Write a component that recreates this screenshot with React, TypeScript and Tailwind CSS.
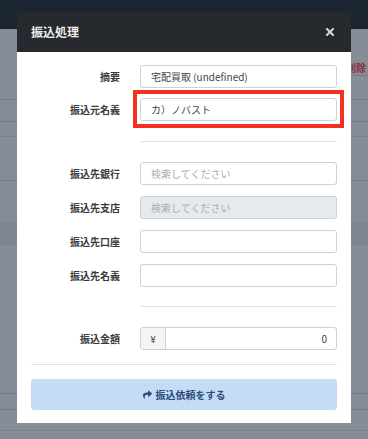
import React from 'react';
import { FaShare } from 'react-icons/fa';

const font = { fontFamily: '"Noto Sans CJK JP", "Noto Sans", sans-serif' };

function Field({ label, children }: { label: string; children: React.ReactNode }) {
  return (
    <div className="flex items-center h-[23px]">
      <div className="w-[89px] shrink-0 text-right text-[10px] font-bold text-[#3a3a3a] leading-none">{label}</div>
      <div className="ml-[20px] flex-1 h-full">{children}</div>
    </div>
  );
}

function TextBox({ value, placeholder, disabled }: { value?: string; placeholder?: string; disabled?: boolean }) {
  return (
    <div
      className={
        'h-full rounded-[3px] border border-[#cdd1da] flex items-center pl-[10px] text-[10px] leading-none ' +
        (disabled ? 'bg-[#e6e9ed]' : 'bg-white')
      }
    >
      {value ? <span className="text-[#444]">{value}</span> : <span className="text-[#a9adb5]">{placeholder}</span>}
    </div>
  );
}

export default function App() {
  return (
    <div className="relative w-[368px] h-[439px] overflow-hidden bg-[#878d96]" style={font}>
      {/* page behind the overlay */}
      <div className="h-[29px] bg-[#1b2531]" />
      <div className="h-[71px] border-b border-[#757b84] flex justify-end">
        <div className="mt-[31px] h-[16px] w-[22px] bg-[#8f8890] border-b border-[#757b84] text-[10px] leading-[16px] text-[#7a3440] font-bold">
          削除
        </div>
      </div>
      <div className="h-[22px] border-b border-[#757b84]" />
      <div className="h-[15px] border-b border-[#7a8089]" />
      <div className="h-[44px] border-b border-[#757b84]" />
      <div className="h-[41px]" />
      <div className="h-[23px] bg-[#7f858e]" />
      <div className="h-[149px] border-b border-[#757b84]" />
      <div className="h-[16px] border-b border-[#757b84]" />
      <div className="h-[21px] border-b border-[#7a8089]" />

      {/* modal */}
      <div className="absolute left-[17px] top-[12px] w-[334px] h-[411px] bg-white flex flex-col">
        <div className="h-[40px] bg-[#26292e] flex items-center justify-between pl-[14px] pr-[17px]">
          <span className="text-[12px] font-bold text-[#eeeeee]">振込処理</span>
          <svg width="8" height="8" viewBox="0 0 8 8">
            <path d="M1 1L7 7M7 1L1 7" stroke="#d9d9d9" strokeWidth="2" strokeLinecap="square" />
          </svg>
        </div>

        <div className="px-[14px] pt-[13px] flex flex-col">
          <div className="flex flex-col gap-[10px]">
            <Field label="摘要">
              <TextBox value="宅配買取 (undefined)" />
            </Field>
            <Field label="振込元名義">
              <TextBox value="カ）ノバスト" />
            </Field>
          </div>

          <div className="ml-[109px] mt-[20px] border-t border-[#dfe2e7]" />

          <div className="mt-[20px] flex flex-col gap-[11px]">
            <Field label="振込先銀行">
              <TextBox placeholder="検索してください" />
            </Field>
            <Field label="振込先支店">
              <TextBox placeholder="検索してください" disabled />
            </Field>
            <Field label="振込先口座">
              <TextBox />
            </Field>
            <Field label="振込先名義">
              <TextBox />
            </Field>
          </div>

          <div className="ml-[109px] mt-[19px] border-t border-[#dfe2e7]" />

          <div className="mt-[20px]">
            <Field label="振込金額">
              <div className="h-full rounded-[3px] border border-[#cdd1da] flex text-[10px] leading-none">
                <div className="w-[25px] shrink-0 bg-[#f3f4f6] border-r border-[#cdd1da] flex items-center justify-center text-[#444] rounded-l-[3px]">
                  ¥
                </div>
                <div className="flex-1 flex items-center justify-end pr-[9px] text-[#444]">0</div>
              </div>
            </Field>
          </div>

          <div className="mt-[14px] border-t border-[#dfe2e7]" />

          <div className="mt-[14px] h-[31px] rounded-[3px] bg-[#c4ddf5] flex items-center justify-center gap-[4px] text-[#2b4c7c]">
            <FaShare size={9} />
            <span className="text-[10px] font-bold">振込依頼をする</span>
          </div>
        </div>
      </div>

      {/* annotation box */}
      <div className="absolute left-[133px] top-[90px] w-[211px] h-[38px] border-4 border-[#f2311f]" />
    </div>
  );
}
